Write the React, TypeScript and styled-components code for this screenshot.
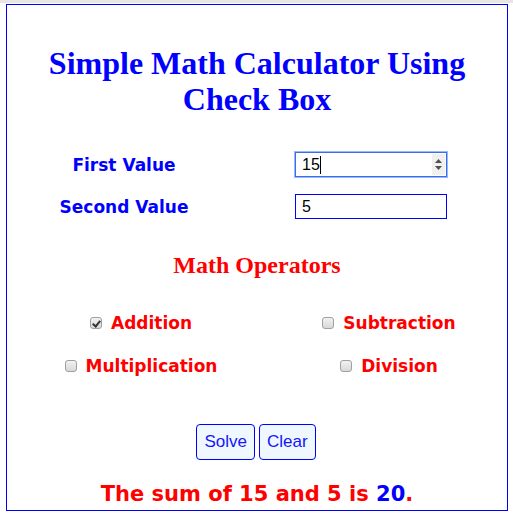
import React, { useState } from 'react';
import styled, { createGlobalStyle } from 'styled-components';

const GlobalStyle = createGlobalStyle`
  html, body {
    margin: 0;
    padding: 0;
    background: #ffffff;
  }
`;

const comic = `"Comic Sans MS", "DejaVu Sans", sans-serif`;

const TopStrip = styled.div`
  height: 3px;
  background: #e6e6e6;
`;
const Frame = styled.div`
  box-sizing: border-box;
  width: 502px;
  height: 507px;
  margin: 1px 0 0 6px;
  border: 1px solid #0000ff;
  display: flex;
  flex-direction: column;
  align-items: stretch;
`;
const Title = styled.h1`
  margin: 40px 0 0;
  text-align: center;
  font-family: "Liberation Serif", serif;
  font-weight: bold;
  font-size: 32px;
  line-height: 36px;
  color: #0000ff;
`;
const FormGrid = styled.div`
  display: grid;
  grid-template-columns: 200px 152px;
  column-gap: 71px;
  row-gap: 17px;
  margin: 35px 0 0 17px;
`;
const Label = styled.div`
  text-align: center;
  font-family: ${comic};
  font-weight: bold;
  font-size: 17px;
  line-height: 25px;
  color: #0000ff;
  position: relative;
  top: 1px;
`;
const InputWrap = styled.div`
  position: relative;
  width: 152px;
  height: 25px;
`;
const TextInput = styled.input<{ $focused?: boolean }>`
  box-sizing: border-box;
  width: 100%;
  height: 100%;
  margin: 0;
  padding: 0 0 0 6px;
  font-family: "Liberation Sans", Arial, sans-serif;
  font-size: 16px;
  color: #000;
  background: #fff;
  border: 1px solid ${(p) => (p.$focused ? '#3a6cf0' : '#0000ff')};
  box-shadow: ${(p) => (p.$focused ? '0 0 0 1px #9ab8f5' : 'none')};
  outline: none;
  border-radius: 0;
`;
const Caret = styled.span`
  position: absolute;
  left: 25px;
  top: 4px;
  width: 1px;
  height: 18px;
  background: #000;
`;
const Spinner = styled.div`
  position: absolute;
  right: 2px;
  top: 2px;
  bottom: 2px;
  width: 13px;
  background: #f0f0f0;
  display: flex;
  flex-direction: column;
  align-items: center;
  justify-content: center;
  gap: 3px;
`;
const Heading = styled.h2`
  margin: 31px 0 0;
  text-align: center;
  font-family: "Liberation Serif", serif;
  font-weight: bold;
  font-size: 24px;
  line-height: 30px;
  color: #ff0000;
`;
const CheckGrid = styled.div`
  display: grid;
  grid-template-columns: 230px 230px;
  column-gap: 18px;
  row-gap: 13px;
  margin: 28px 0 0 19px;
`;
const CheckCell = styled.label`
  display: flex;
  align-items: center;
  justify-content: center;
  gap: 9px;
  height: 30px;
  font-family: ${comic};
  font-weight: bold;
  font-size: 17px;
  color: #ff0000;
`;
const Box = styled.input`
  appearance: none;
  box-sizing: border-box;
  width: 12px;
  height: 12px;
  margin: 0;
  border: 1px solid #a0a0a0;
  border-radius: 3px;
  background: linear-gradient(#f2f2f2, #d8d8d8);
  position: relative;
  &:checked::after {
    content: '';
    position: absolute;
    left: 3px;
    top: 1px;
    width: 3px;
    height: 6px;
    border: solid #333;
    border-width: 0 2px 2px 0;
    transform: rotate(40deg);
  }
`;
const Buttons = styled.div`
  display: flex;
  justify-content: center;
  gap: 4px;
  margin-top: 43px;
  padding-right: 2px;
`;
const Button = styled.button`
  box-sizing: border-box;
  height: 36px;
  padding: 0 7px;
  font-family: "Liberation Sans", Arial, sans-serif;
  font-size: 17px;
  color: #1414ff;
  background: #f0f8ff;
  border: 1px solid #0000ff;
  border-radius: 4px;
`;
const Result = styled.div`
  margin-top: 19px;
  text-align: center;
  font-family: ${comic};
  font-weight: bold;
  font-size: 21px;
  line-height: 30px;
  color: #ff0000;
`;
const Answer = styled.span`
  color: #0000ff;
`;

const ops = [
  { key: 'add', label: 'Addition' },
  { key: 'sub', label: 'Subtraction' },
  { key: 'mul', label: 'Multiplication' },
  { key: 'div', label: 'Division' },
];

const App = () => {
  const [first, setFirst] = useState('15');
  const [second, setSecond] = useState('5');
  const [checked, setChecked] = useState<string>('add');

  return (
    <>
      <GlobalStyle />
      <TopStrip />
      <Frame>
        <Title>
          Simple Math Calculator Using
          <br />
          Check Box
        </Title>
        <FormGrid>
          <Label>First Value</Label>
          <InputWrap>
            <TextInput $focused value={first} onChange={(e) => setFirst(e.target.value)} />
            <Caret />
            <Spinner>
              <svg width="7" height="4" viewBox="0 0 7 4">
                <path d="M0 4 L3.5 0 L7 4 Z" fill="#505050" />
              </svg>
              <svg width="7" height="4" viewBox="0 0 7 4">
                <path d="M0 0 L7 0 L3.5 4 Z" fill="#505050" />
              </svg>
            </Spinner>
          </InputWrap>
          <Label>Second Value</Label>
          <InputWrap>
            <TextInput value={second} onChange={(e) => setSecond(e.target.value)} />
          </InputWrap>
        </FormGrid>
        <Heading>Math Operators</Heading>
        <CheckGrid>
          {ops.map((op) => (
            <CheckCell key={op.key}>
              <Box
                type="checkbox"
                checked={checked === op.key}
                onChange={() => setChecked(op.key)}
              />
              {op.label}
            </CheckCell>
          ))}
        </CheckGrid>
        <Buttons>
          <Button>Solve</Button>
          <Button>Clear</Button>
        </Buttons>
        <Result>
          The sum of 15 and 5 is <Answer>20</Answer>.
        </Result>
      </Frame>
    </>
  );
};

export default App;
